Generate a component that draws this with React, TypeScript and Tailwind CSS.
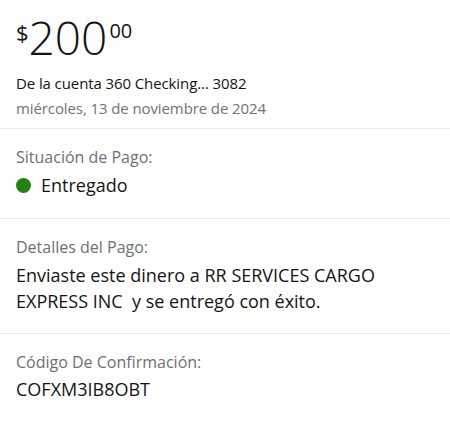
export default function App() {
  return (
    <div className="w-[450px] h-[430px] bg-white overflow-hidden text-[#141414]" style={{ fontFamily: '"Open Sans", "Noto Sans", sans-serif' }}>
      <div className="pl-4 pt-[15px] pb-[10px] border-b border-[#ebebeb]">
        <div className="flex items-start">
          <span className="text-[22px] leading-none mt-[6px]">$</span>
          <span className="text-[46px] leading-[45px] font-light">200</span>
          <span className="text-[20px] leading-none mt-[6px] ml-[2px]">00</span>
        </div>
        <div className="mt-[13px] text-[15px] leading-[20px] tracking-[-0.1px]">De la cuenta 360 Checking... 3082</div>
        <div className="mt-[5px] text-[15px] leading-[20px] text-[#707375] tracking-[-0.1px]">miércoles, 13 de noviembre de 2024</div>
      </div>
      <div className="pl-4 pt-[17px] pb-[21px] border-b border-[#ebebeb]">
        <div className="text-[16px] leading-[22px] text-[#6d7073]">Situación de Pago:</div>
        <div className="mt-[5px] flex items-center gap-[10px]">
          <span className="w-[15px] h-[15px] rounded-full bg-[#25800f]" />
          <span className="text-[18px] leading-[24px]">Entregado</span>
        </div>
      </div>
      <div className="pl-4 pt-[17px] pb-[19px] border-b border-[#ebebeb]">
        <div className="text-[16px] leading-[22px] text-[#6d7073]">Detalles del Pago:</div>
        <div className="mt-[4px] text-[18px] leading-[26px] pr-4">
          Enviaste este dinero a RR SERVICES CARGO EXPRESS INC&nbsp; y se entregó con éxito.
        </div>
      </div>
      <div className="pl-4 pt-[17px]">
        <div className="text-[16px] leading-[22px] text-[#6d7073]">Código De Confirmación:</div>
        <div className="mt-[4px] text-[18px] leading-[24px]">COFXM3IB8OBT</div>
      </div>
    </div>
  );
}
